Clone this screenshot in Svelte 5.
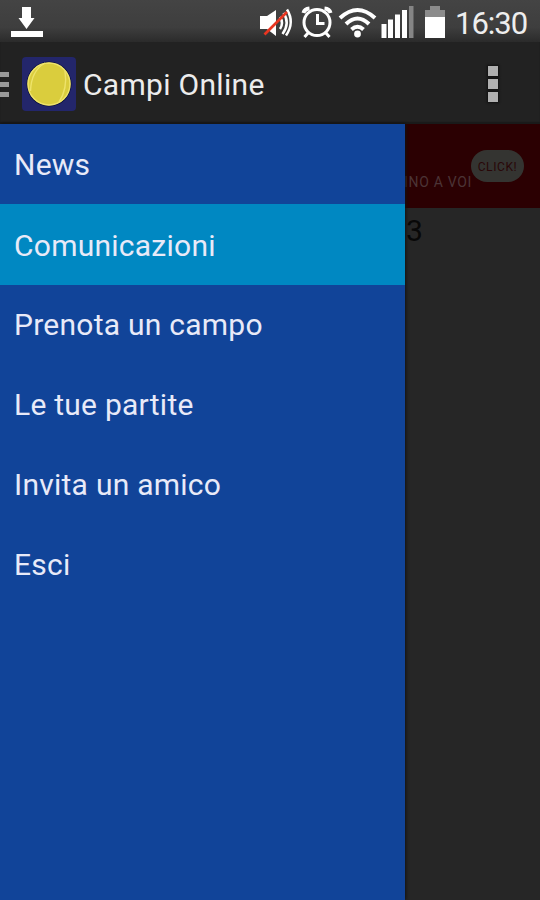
<script lang="ts">
type MenuItem = { id: string; label: string };

const items: MenuItem[] = [
  { id: "news", label: "News" },
  { id: "messages", label: "Comunicazioni" },
  { id: "booking", label: "Prenota un campo" },
  { id: "matches", label: "Le tue partite" },
  { id: "invite", label: "Invita un amico" },
  { id: "exit", label: "Esci" },
];

let selected = $state("messages");
</script>

<div class="screen">
  <header class="status-bar">
    <svg class="download" width="34" height="32" viewBox="0 0 34 32" aria-hidden="true">
      <path d="M12 0h9v11h3.500L16.500 22 8.500 11H12z" />
      <path d="M1 24h32v6H1z" />
    </svg>
    <div class="status-icons">
      <svg width="120" height="42" viewBox="258 0 120 42" aria-hidden="true">
        <path d="M260 16h7l9-6v26l-9-7h-7z" fill="#fff" />
        <g fill="none" stroke="#fff" stroke-width="2.500">
          <path d="M280 17q4 6 0 12M283.500 13q7 10-1 21M287 9.500q8 13-1 26" />
        </g>
        <path d="M264.500 34.500 287 12" stroke="#e93520" stroke-width="2.600" />

        <g fill="none" stroke="#fff" stroke-width="3">
          <circle cx="317" cy="22.500" r="13" />
          <path d="M317.500 14v9.500h7M308.500 32.500l-4 4.500M325.500 32.500l4 4.500" />
          <path d="M303.500 13q1-4 6-4.500M324.500 8.500q5 .5 6 4.500" stroke-width="4" />
        </g>

        <g fill="none" stroke="#fff" stroke-width="4">
          <path d="M340 18q17.500-16 35 0M346 24q11.500-11 23 0M351.500 29.500q6-5.500 12 0" />
        </g>
        <circle cx="357.500" cy="34" r="3.400" fill="#fff" />
      </svg>
      <svg class="levels" width="66" height="42" viewBox="381 0 66 42" aria-hidden="true">
        <g fill="#fff">
          <path d="M381.500 24h5v14h-5zM388 19.500h5V38h-5zM395 14.500h5V38h-5zM402 10h5v28h-5z" />
        </g>
        <path d="M409 6h4.500v32H409z" fill="#858585" />
        <path d="M425 10h5V6h10v4h5v8h-20z" fill="#8b8b8b" />
        <path d="M425 17h20v21h-20z" fill="#fff" />
      </svg>
      <span class="clock">16:30</span>
    </div>
  </header>

  <div class="action-bar">
    <svg class="burger" width="9" height="26" viewBox="0 0 9 26" aria-hidden="true">
      <path d="M0 0h9v5H0zM0 10h9v5H0zM0 20h9v5H0z" />
    </svg>
    <svg class="logo" width="54" height="54" viewBox="0 0 54 54" aria-hidden="true">
      <rect width="54" height="54" rx="4" fill="#23266b" />
      <circle cx="27" cy="27" r="22.500" fill="#0c103f" />
      <circle cx="27" cy="27" r="21.500" fill="#dacd3d" />
      <g fill="none" stroke="#eee36b" stroke-width="1.400">
        <circle cx="27" cy="27" r="21" />
        <path d="M23 6C14 11 9 20 8.500 34M43 14c2 13 0 22-6 31" />
      </g>
    </svg>
    <h1>Campi Online</h1>
    <button class="overflow" aria-label="Menu">
      <span></span>
      <span></span>
      <span></span>
    </button>
  </div>

  <div class="body">
    <nav class="drawer">
      {#each items as item (item.id)}
        <button class="item" class:selected={item.id === selected} onclick={() => (selected = item.id)}>
          {item.label}
        </button>
      {/each}
    </nav>
    <main class="content">
      <div class="banner">
        <span class="promo">INO A VOI</span>
        <span class="click">CLICK!</span>
      </div>
      <div class="count">3</div>
    </main>
  </div>
</div>

<style>
  :global(body) {
    margin: 0;
    background: #262626;
  }

  .screen {
    width: 540px;
    height: 900px;
    display: flex;
    flex-direction: column;
    overflow: hidden;
    font-family: Roboto, "Liberation Sans", sans-serif;
    color: #e8eaf8;
  }

  .status-bar {
    height: 42px;
    display: flex;
    justify-content: space-between;
    background: linear-gradient(#444, #3e3e3e 65%, #2b2b2b);
  }

  .download {
    margin: 7px 0 0 10px;
    fill: #fff;
  }

  .status-icons {
    display: flex;
    padding-right: 12px;
  }

  .levels {
    margin: 0 8px 0 3px;
  }

  .clock {
    width: 73px;
    font-size: 31px;
    line-height: 47px;
    letter-spacing: -1px;
    color: #eee;
  }

  .action-bar {
    height: 82px;
    flex: none;
    display: flex;
    align-items: center;
    background: #222;
    box-shadow: inset 0 -2px 1px #1a1a1a;
  }

  .burger {
    margin-top: 3px;
    fill: #999;
  }

  .logo {
    margin: 2px 0 0 13px;
  }

  h1 {
    flex: 1;
    margin: 3px 0 0 7px;
    font-size: 30px;
    font-weight: 400;
    line-height: 40px;
    letter-spacing: 0.3px;
    color: #ececec;
  }

  .overflow {
    display: flex;
    flex-direction: column;
    gap: 3px;
    margin: 1px 42px 0 0;
    padding: 0;
    border: 0;
    background: none;
  }

  .overflow span {
    width: 10px;
    height: 10px;
    background: #b0b0b0;
    box-shadow: 0 0 2px 1px #111;
  }

  .body {
    flex: 1;
    display: flex;
  }

  .drawer {
    width: 405px;
    flex: none;
    background: #114499;
    box-shadow: 1px 0 3px #111;
    z-index: 1;
  }

  .item {
    display: flex;
    align-items: center;
    width: 100%;
    height: 80px;
    padding: 1px 0 0 14px;
    border: 0;
    background: none;
    font: inherit;
    font-size: 30px;
    letter-spacing: 0.25px;
    color: inherit;
    cursor: pointer;
  }

  .item.selected {
    height: 81px;
    margin-bottom: -1px;
    background: #0088c2;
  }

  .content {
    flex: 1;
    background: #262626;
  }

  .banner {
    height: 84px;
    display: flex;
    background: #2b0002;
    white-space: nowrap;
  }

  .promo {
    width: 66px;
    margin-top: 50px;
    font-size: 14px;
    line-height: 16px;
    letter-spacing: 0.7px;
    text-indent: -1px;
    color: #4b3436;
  }

  .click {
    width: 53px;
    height: 32px;
    margin-top: 26px;
    border-radius: 16px;
    background: #343431;
    font-size: 12px;
    line-height: 34px;
    letter-spacing: 0.6px;
    text-align: center;
    color: #290708;
  }

  .count {
    padding-left: 1px;
    font-size: 30px;
    line-height: 46px;
    color: #080808;
  }
</style>
